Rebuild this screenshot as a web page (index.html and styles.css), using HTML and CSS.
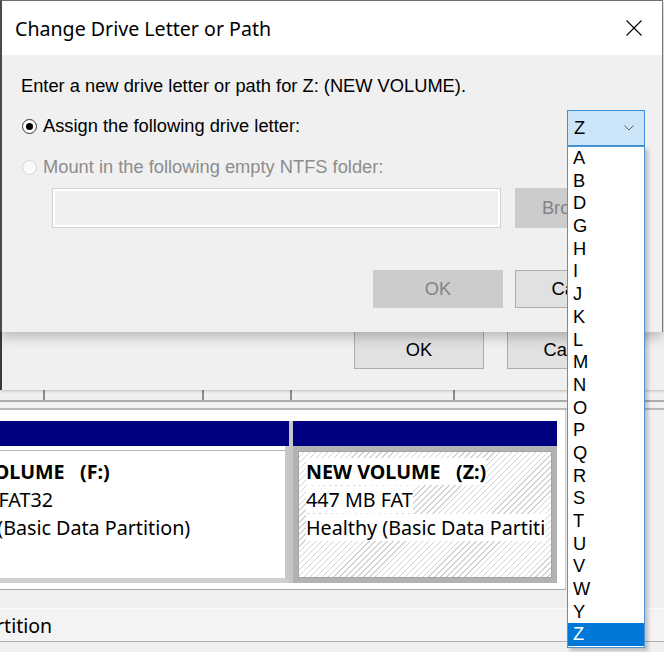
FILE: index.html
```html
<!DOCTYPE html>
<html lang="en">
<head>
<meta charset="utf-8">
<title>Change Drive Letter or Path</title>
<link rel="stylesheet" href="styles.css">
</head>
<body>
<div class="desktop">
  <main class="mmc">
    <div class="volume-list">
      <div class="list-row">
        <span class="col c1"></span>
        <span class="col c2"></span>
        <span class="col c3"></span>
        <span class="col c4"></span>
      </div>
    </div>
    <div class="splitter"></div>
    <div class="disk-pane">
      <div class="disk-map">
        <div class="partition part-f">
          <div class="part-bar"></div>
          <div class="part-body">
            <div class="part-inner">
              <div class="pline bold off1"><span>NEW VOLUME&nbsp;&nbsp;&nbsp;(F:)</span></div>
              <div class="pline off2"><span>14.4 GB FAT32</span></div>
              <div class="pline off3"><span>Healthy (Basic Data Partition)</span></div>
            </div>
          </div>
        </div>
        <div class="part-gap"></div>
        <div class="partition part-z">
          <div class="part-bar"></div>
          <div class="part-body">
            <div class="part-inner hatched">
              <div class="pline bold"><span>NEW VOLUME&nbsp;&nbsp;&nbsp;(Z:)</span></div>
              <div class="pline"><span>447 MB FAT</span></div>
              <div class="pline"><span>Healthy (Basic Data Partiti</span></div>
            </div>
          </div>
        </div>
      </div>
      <div class="disk-rest"></div>
    </div>
    <div class="legend-gap"></div>
    <div class="legend-row"><span class="legend-text">Primary partition</span></div>
  </main>

  <section class="dlg dlg-back">
    <div class="btn-row">
      <button class="btn">OK</button>
      <button class="btn">Cancel</button>
    </div>
  </section>

  <section class="dlg dlg-front">
    <header class="titlebar">
      <span class="title">Change Drive Letter or Path</span>
      <svg class="close" width="16" height="16" viewBox="0 0 16 16"><path d="M0.5 0.5 L15.5 15.5 M15.5 0.5 L0.5 15.5" stroke="#000" stroke-width="1.1" fill="none"/></svg>
    </header>
    <div class="dlg-body">
      <p class="prompt">Enter a new drive letter or path for Z: (NEW VOLUME).</p>
      <div class="row-assign">
        <label class="radio-label"><span class="radio checked"></span>Assign the following drive letter:</label>
        <div class="combo">
          <span class="combo-value">Z</span>
          <svg class="chev" width="10" height="6" viewBox="0 0 10 6"><path d="M0.5 0.5 L5 5 L9.5 0.5" stroke="#606060" stroke-width="1" fill="none"/></svg>
          <ul class="combo-list">
            <li>A</li><li>B</li><li>D</li><li>G</li><li>H</li><li>I</li><li>J</li><li>K</li><li>L</li><li>M</li><li>N</li><li>O</li><li>P</li><li>Q</li><li>R</li><li>S</li><li>T</li><li>U</li><li>V</li><li>W</li><li>Y</li><li class="sel">Z</li>
          </ul>
        </div>
      </div>
      <div class="row-mount">
        <label class="radio-label disabled"><span class="radio"></span>Mount in the following empty NTFS folder:</label>
      </div>
      <div class="folder-row">
        <div class="textbox"></div>
        <button class="btn disabled wide">Browse...</button>
      </div>
      <div class="btn-row front-btns">
        <button class="btn disabled">OK</button>
        <button class="btn">Cancel</button>
      </div>
    </div>
  </section>
</div>
</body>
</html>
```

FILE: styles.css
```css
* { box-sizing: border-box; }
html, body { margin: 0; padding: 0; }
body {
  width: 664px;
  height: 652px;
  overflow: hidden;
  background: #f0f0f0;
  font-family: "Liberation Sans", Arial, sans-serif;
  color: #000;
}
.desktop {
  position: relative;
  width: 664px;
  height: 652px;
  overflow: hidden;
}

/* ---------- background: disk management ---------- */
.mmc {
  display: flex;
  flex-direction: column;
  width: 664px;
  height: 652px;
}
.volume-list {
  height: 402px;
  border-bottom: 2px solid #acacac;
  display: flex;
  flex-direction: column;
  justify-content: flex-end;
}
.list-row { height: 10px; display: flex; }
.list-row .col { height: 10px; border-right: 2px solid #8c8c8c; }
.c1 { width: 45px; }
.c2 { width: 159px; }
.c3 { width: 88px; }
.c4 { width: 163px; }
.splitter {
  height: 8px;
  border-bottom: 2px solid #b8b8b8;
}
.disk-pane {
  height: 180px;
  display: flex;
}
.disk-map {
  width: 566px;
  background: #fff;
  border-right: 1px solid #c8c8c8;
  border-bottom: 1px solid #a8a8a8;
  padding-top: 11px;
  display: flex;
  align-items: flex-start;
}
.disk-rest { flex: 1; }
.partition { display: flex; flex-direction: column; }
.part-f { width: 289px; }
.part-z { width: 264px; }
.part-gap { width: 4px; height: 162px; background: #c6c6c6; }
.part-bar { height: 25px; background: #000080; }
.part-body { height: 137px; }
.part-f .part-body {
  background: #fff;
  padding-top: 4px;
  border-right: 4px solid #c8c8c8;
  border-bottom: 5px solid #cfcfcf;
}
.part-f .part-inner {
  height: 100%;
  border-top: 1px solid #b4b4b4;
  padding-top: 7px;
}
.part-z .part-body {
  background: #b2b2b2;
  padding: 5px;
}
.part-z .part-inner {
  height: 100%;
  padding: 6px 0 0 7px;
  border: 1px solid #a4a4a4;
  overflow: hidden;
}
.hatched {
  background: repeating-linear-gradient(135deg, #ffffff 0 3.2px, #d4d4d4 3.2px 4.2px);
}
.pline {
  font-family: "Noto Sans", "Open Sans", sans-serif;
  font-size: 19.7px;
  line-height: 28px;
  height: 28px;
  white-space: nowrap;
  color: #000;
}
.pline span { background: #fff; }
.pline.bold { font-weight: 700; }
.off1 { margin-left: -70px; }
.off2 { margin-left: -78px; }
.off3 { margin-left: -79px; }

.legend-gap { height: 18px; }
.legend-row {
  height: 34px;
  border-top: 1px solid #fbfbfb;
  border-bottom: 1px solid #b0b0b0;
  background: #f3f3f3;
  display: flex;
  align-items: center;
  overflow: hidden;
}
.legend-text {
  font-family: "Noto Sans", "Open Sans", sans-serif;
  font-size: 19.5px;
  margin-left: -104px;
  white-space: nowrap;
}

/* ---------- dialogs ---------- */
.dlg { position: absolute; left: 0; top: 0; background: #f0f0f0; }
.btn {
  width: 130px;
  height: 38px;
  background: #e1e1e1;
  border: 1px solid #adadad;
  font-family: "Liberation Sans", Arial, sans-serif;
  font-size: 18.3px;
  color: #000;
  padding: 0;
  white-space: nowrap;
  overflow: hidden;
}
.btn.disabled {
  background: #cccccc;
  border-color: #cccccc;
  color: #838383;
}
.btn.wide { height: 40px; }
.btn-row { display: flex; }

.dlg-back {
  width: 700px;
  height: 390px;
  border-left: 2px solid #3a3a3a;
  box-shadow: 0 1px 3px rgba(0, 0, 0, 0.22);
  display: flex;
  flex-direction: column;
  justify-content: flex-end;
  padding: 0 0 21px 352px;
}
.dlg-back .btn-row { gap: 23px; }

.dlg-front {
  width: 663px;
  height: 332px;
  border-left: 2px solid #4a4a4a;
  border-top: 1px solid #707070;
  border-right: 1px solid #7a7a7a;
  box-shadow: 0 5px 12px rgba(0, 0, 0, 0.24);
}
.titlebar {
  height: 54px;
  background: #fff;
  display: flex;
  align-items: center;
  justify-content: space-between;
  padding: 0 20px 0 13px;
}
.title {
  font-family: "Noto Sans", "Open Sans", sans-serif;
  font-size: 19.6px;
  color: #000;
}
.close { display: block; }

.dlg-body { padding: 0 17px 0 19px; }
.prompt {
  margin: 20px 0 0;
  font-size: 18.3px;
  line-height: 22px;
  height: 22px;
}
.row-assign {
  margin-top: 13px;
  height: 36px;
  display: flex;
  justify-content: space-between;
  align-items: center;
}
.radio-label {
  display: flex;
  align-items: center;
  font-size: 18.3px;
  line-height: 22px;
  white-space: nowrap;
}
.row-assign .radio-label { margin-bottom: 4px; }
.radio-label.disabled { color: #8d8d8d; }
.radio {
  width: 15px;
  height: 15px;
  border-radius: 50%;
  border: 1px solid #333;
  background: #fff;
  margin: 0 6px 0 1px;
  display: flex;
  align-items: center;
  justify-content: center;
}
.radio.checked::after {
  content: "";
  width: 7px;
  height: 7px;
  border-radius: 50%;
  background: #000;
}
.disabled .radio { border-color: #d4d4d4; background: #fafafa; }

.combo {
  position: relative;
  width: 78px;
  height: 36px;
  background: #cce4f7;
  border: 1px solid #3d8ed8;
  display: flex;
  align-items: center;
  justify-content: space-between;
  padding: 0 10px 0 6px;
  font-size: 18.3px;
}
.combo-list {
  position: absolute;
  left: -1px;
  top: 35px;
  width: 78px;
  height: 502px;
  margin: 0;
  padding: 0;
  list-style: none;
  background: #fff;
  border: 1px solid #4d97d8;
  box-shadow: 3px 3px 4px rgba(0, 0, 0, 0.22);
  z-index: 5;
}
.combo-list li {
  height: 22.7px;
  line-height: 22.7px;
  padding-left: 5px;
  font-size: 18.3px;
}
.combo-list li.sel { background: #0078d7; color: #fff; }

.row-mount {
  margin-top: 10px;
  height: 22px;
}
.folder-row {
  margin: 10px 0 0 31px;
  display: flex;
  gap: 14px;
}
.textbox {
  width: 449px;
  height: 40px;
  border: 1px solid #d2d2d2;
  box-shadow: inset 0 0 0 2px #fff;
  background: #f0f0f0;
}
.front-btns {
  margin-top: 42px;
  justify-content: flex-end;
  gap: 12px;
}
```
